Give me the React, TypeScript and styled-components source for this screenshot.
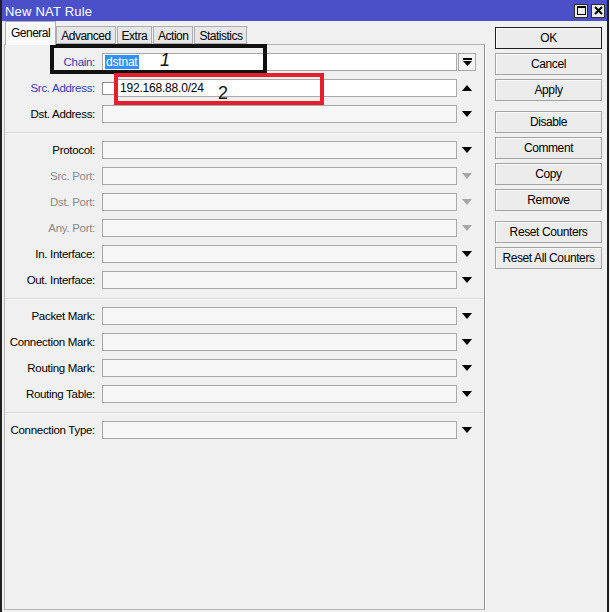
import React from 'react';
import styled, { createGlobalStyle } from 'styled-components';

const GlobalStyle = createGlobalStyle`
	html, body {
		margin: 0;
		padding: 0;
		background: #f0f0f0;
	}
	body {
		font-family: "Liberation Sans", Arial, sans-serif;
		font-size: 11.5px;
		letter-spacing: -0.3px;
		color: #000;
	}
`;

const Window = styled.div`
	position: relative;
	width: 605px;
	height: 612px;
	background: #f0f0f0;
	border-left: 2px solid #202020;
	border-right: 2px solid #202020;
	display: flex;
	flex-direction: column;
	overflow: hidden;
`;

const TitleBar = styled.div`
	height: 21px;
	flex: 0 0 21px;
	background: #4c50c8;
	display: flex;
	align-items: center;
	padding: 0 2px 0 3px;
	color: #fff;
	font-size: 13px;
	letter-spacing: 0.2px;
`;

const TitleText = styled.span`
	flex: 1;
	padding-top: 1px;
`;

const TitleButton = styled.div`
	width: 14px;
	height: 14px;
	margin-left: 3px;
	background: #ececec;
	border: 1px solid #2c2c2c;
	display: flex;
	align-items: center;
	justify-content: center;
	box-sizing: border-box;
`;

const Body = styled.div`
	flex: 1;
	display: flex;
	padding-left: 2px;
`;

const LeftCol = styled.div`
	width: 481px;
	display: flex;
	flex-direction: column;
	padding-bottom: 2px;
`;

const TabStrip = styled.div`
	height: 23px;
	display: flex;
	align-items: flex-end;
	padding-left: 1px;
	position: relative;
	z-index: 1;
`;

const Tab = styled.div<{ $active?: boolean }>`
	box-sizing: border-box;
	height: ${(p) => (p.$active ? '24px' : '18px')};
	margin-bottom: ${(p) => (p.$active ? '-1px' : '0')};
	padding: ${(p) => (p.$active ? '4px 5px 0' : '2px 4px 0')};
	background: ${(p) => (p.$active ? '#fbfbfb' : '#e6e6e6')};
	border: 1px solid #adadad;
	border-bottom: ${(p) => (p.$active ? 'none' : '1px solid #adadad')};
	margin-right: ${(p) => (p.$active ? '0' : '1px')};
	font-size: 12px;
	letter-spacing: -0.5px;
	white-space: nowrap;
`;

const Panel = styled.div`
	flex: 1;
	border: 1px solid #b4b4b4;
	border-right-color: #8c8c8c;
	box-shadow: 1px 0 0 #fff;
	padding-top: 8px;
	display: flex;
	flex-direction: column;
	gap: 8px;
	position: relative;
`;

const Row = styled.div`
	display: flex;
	align-items: center;
	height: 18px;
`;

const Label = styled.div<{ $tone?: 'blue' | 'gray' }>`
	width: 90px;
	margin-right: 7px;
	text-align: right;
	white-space: nowrap;
	color: ${(p) => (p.$tone === 'blue' ? '#2f3db5' : p.$tone === 'gray' ? '#8a8a8a' : '#000')};
`;

const Field = styled.div<{ $white?: boolean; $narrow?: boolean }>`
	box-sizing: border-box;
	width: ${(p) => (p.$narrow ? '340px' : '355px')};
	height: 18px;
	border: 1px solid #a9a9a9;
	background: ${(p) => (p.$white ? '#fff' : '#f7f7f7')};
	display: flex;
	align-items: center;
	padding-left: 2px;
	font-size: 12px;
	letter-spacing: -0.2px;
`;

const Selected = styled.span`
	background: #3390ff;
	color: #fff;
	padding: 0 1px;
	line-height: 14px;
`;

const Check = styled.div`
	box-sizing: border-box;
	width: 13px;
	height: 13px;
	border: 1px solid #8f8f8f;
	background: #fff;
	margin-right: 2px;
`;

const ArrowSlot = styled.div`
	width: 20px;
	height: 18px;
	display: flex;
	align-items: center;
	justify-content: center;
`;

const DropButton = styled.div`
	box-sizing: border-box;
	width: 18px;
	height: 18px;
	margin-left: 1px;
	border: 1px solid #a9a9a9;
	background: #f2f2f2;
	display: flex;
	align-items: center;
	justify-content: center;
`;

const Separator = styled.div`
	margin-top: 1px;
	height: 0;
	border-top: 1px solid #d8d8d8;
	border-bottom: 1px solid #fafafa;
	margin-bottom: -1px;
`;

const RightCol = styled.div`
	width: 107px;
	margin-left: 10px;
	padding-top: 6px;
	display: flex;
	flex-direction: column;
	gap: 10px;
`;

const ButtonGroup = styled.div`
	display: flex;
	flex-direction: column;
	gap: 4px;
`;

const Button = styled.div<{ $default?: boolean }>`
	box-sizing: border-box;
	height: 22px;
	border: 1px solid ${(p) => (p.$default ? '#1e1e1e' : '#a3a3a3')};
	background: #ececec;
	box-shadow: inset 1px 1px 0 #fafafa;
	display: flex;
	align-items: center;
	justify-content: center;
	font-size: 12px;
	letter-spacing: -0.4px;
`;

const Marker = styled.div<{ $color: string; $left: number; $top: number; $w: number; $h: number }>`
	position: absolute;
	left: ${(p) => p.$left}px;
	top: ${(p) => p.$top}px;
	width: ${(p) => p.$w}px;
	height: ${(p) => p.$h}px;
	box-sizing: border-box;
	border: 4px solid ${(p) => p.$color};
	pointer-events: none;
`;

const MarkerNum = styled.span<{ $left: number; $top: number; $italic?: boolean }>`
	position: absolute;
	left: ${(p) => p.$left}px;
	top: ${(p) => p.$top}px;
	font-size: 18px;
	letter-spacing: 0;
	font-style: ${(p) => (p.$italic ? 'italic' : 'normal')};
	color: #111;
	line-height: 1;
`;

const DownArrow = ({ gray }: { gray?: boolean }) => (
	<svg width="10" height="6" viewBox="0 0 10 6">
		<path d="M0 0 H10 L5 6 Z" fill={gray ? '#a8a8a8' : '#000'} />
	</svg>
);

const UpArrow = () => (
	<svg width="10" height="6" viewBox="0 0 10 6">
		<path d="M0 6 H10 L5 0 Z" fill="#000" />
	</svg>
);

const BarArrow = () => (
	<svg width="9" height="8" viewBox="0 0 9 8">
		<rect x="0" y="0" width="9" height="2" fill="#000" />
		<path d="M0 3 H9 L4.5 8 Z" fill="#000" />
	</svg>
);

type FieldRow = { label: string; tone?: 'blue' | 'gray' };

const groups: FieldRow[][] = [
	[
		{ label: 'Protocol:' },
		{ label: 'Src. Port:', tone: 'gray' },
		{ label: 'Dst. Port:', tone: 'gray' },
		{ label: 'Any. Port:', tone: 'gray' },
		{ label: 'In. Interface:' },
		{ label: 'Out. Interface:' },
	],
	[
		{ label: 'Packet Mark:' },
		{ label: 'Connection Mark:' },
		{ label: 'Routing Mark:' },
		{ label: 'Routing Table:' },
	],
	[{ label: 'Connection Type:' }],
];

const tabs = ['General', 'Advanced', 'Extra', 'Action', 'Statistics'];

const buttonGroups = [
	['OK', 'Cancel', 'Apply'],
	['Disable', 'Comment', 'Copy', 'Remove'],
	['Reset Counters', 'Reset All Counters'],
];

const App: React.FC = () => {
	return (
		<>
			<GlobalStyle />
			<Window>
				<TitleBar>
					<TitleText>New NAT Rule</TitleText>
					<TitleButton>
						<svg width="9" height="9" viewBox="0 0 9 9">
							<rect x="0.5" y="0.5" width="8" height="8" fill="none" stroke="#000" />
							<rect x="0" y="0" width="9" height="2" fill="#000" />
						</svg>
					</TitleButton>
					<TitleButton>
						<svg width="9" height="9" viewBox="0 0 9 9">
							<path d="M1 1 L8 8 M8 1 L1 8" stroke="#000" strokeWidth="2" />
						</svg>
					</TitleButton>
				</TitleBar>
				<Body>
					<LeftCol>
						<TabStrip>
							{tabs.map((t, i) => (
								<Tab key={t} $active={i === 0}>
									{t}
								</Tab>
							))}
						</TabStrip>
						<Panel>
							<Row>
								<Label $tone="blue">Chain:</Label>
								<Field $white>
									<Selected>dstnat</Selected>
								</Field>
								<DropButton>
									<BarArrow />
								</DropButton>
							</Row>
							<Row>
								<Label $tone="blue">Src. Address:</Label>
								<Check />
								<Field $white $narrow>
									192.168.88.0/24
								</Field>
								<ArrowSlot>
									<UpArrow />
								</ArrowSlot>
							</Row>
							<Row>
								<Label>Dst. Address:</Label>
								<Field />
								<ArrowSlot>
									<DownArrow />
								</ArrowSlot>
							</Row>
							{groups.map((g, gi) => (
								<React.Fragment key={gi}>
									<Separator />
									{g.map((r) => (
										<Row key={r.label}>
											<Label $tone={r.tone}>{r.label}</Label>
											<Field />
											<ArrowSlot>
												<DownArrow gray={r.tone === 'gray'} />
											</ArrowSlot>
										</Row>
									))}
								</React.Fragment>
							))}
						</Panel>
					</LeftCol>
					<RightCol>
						{buttonGroups.map((g, gi) => (
							<ButtonGroup key={gi}>
								{g.map((b) => (
									<Button key={b} $default={b === 'OK'}>
										{b}
									</Button>
								))}
							</ButtonGroup>
						))}
					</RightCol>
				</Body>
				<Marker $color="#111" $left={48} $top={44} $w={217} $h={30} />
				<Marker $color="#e3202b" $left={112} $top={73} $w={210} $h={32} />
				<MarkerNum $italic $left={158} $top={51}>
					1
				</MarkerNum>
				<MarkerNum $left={216} $top={84}>
					2
				</MarkerNum>
			</Window>
		</>
	);
};

export default App;
